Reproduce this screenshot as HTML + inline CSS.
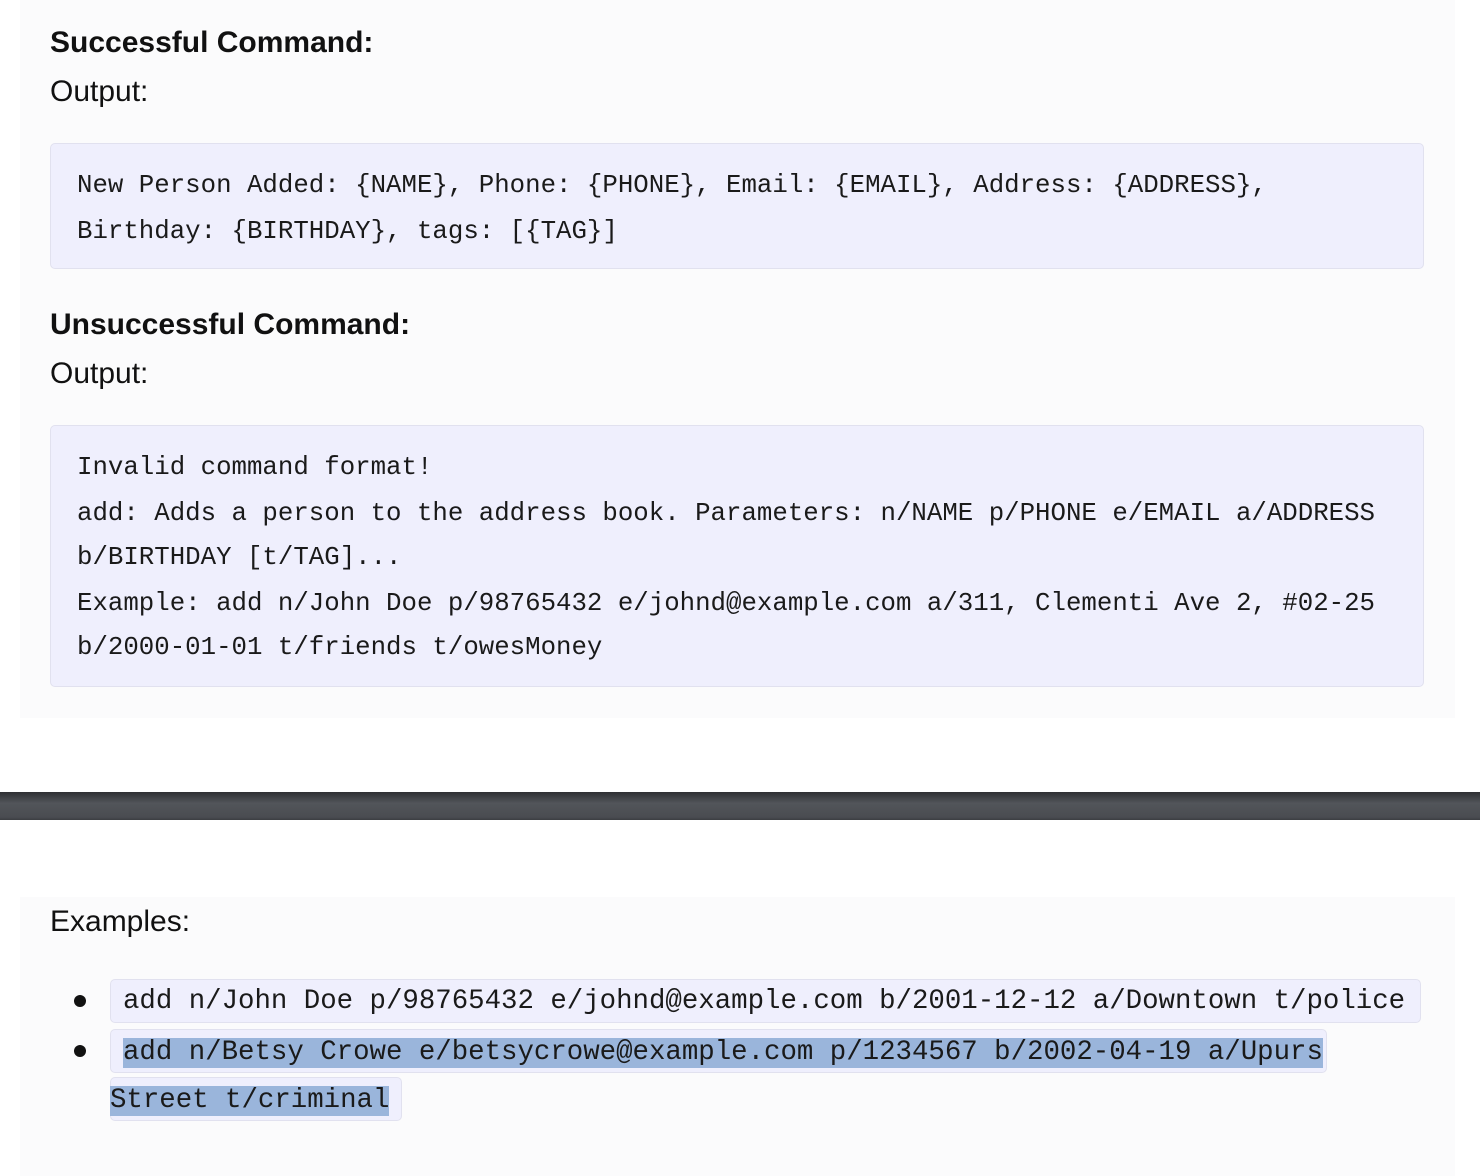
<!DOCTYPE html>
<html><head><style>
body{margin:0;width:1480px;height:1176px;background:#fff;position:relative;overflow:hidden;font-family:"Liberation Sans",sans-serif;color:#111}
.panel{position:absolute;left:20px;width:1435px;background:#fbfbfc}
.t{position:absolute;left:50px;white-space:nowrap}
.h{font-weight:bold;font-size:30px}
.o{font-size:30px}
.code{position:absolute;left:50px;width:1374px;background:#efeffd;border:1px solid #e1e1ef;border-radius:5px;box-sizing:border-box}
.code div{position:absolute;left:26px;font-family:"Liberation Mono",monospace;font-size:25.75px;white-space:nowrap;color:#1a1a1a}
.bar{position:absolute;left:0;top:792px;width:1480px;height:28px;background:linear-gradient(#2e2f33,#52555a 40%,#4a4c51 90%,#3c3d41)}
.ic{position:absolute;background:#efeffd;border:1px solid #e1e1ef;border-radius:5px;box-sizing:border-box}
.m{position:absolute;font-family:"Liberation Mono",monospace;font-size:27.4px;white-space:nowrap;color:#1a1a1a}
.sel{background:#9ab5db}
.dot{position:absolute;left:74px;width:12px;height:12px;border-radius:50%;background:#111}
</style></head><body>
<div class="panel" style="top:0;height:718px"></div>
<div class="panel" style="top:897px;height:279px"></div>
<div class="t h" style="top:26px">Successful Command:</div>
<div class="t o" style="top:75px">Output:</div>
<div class="code" style="top:143px;height:126px">
<div style="top:27px">New Person Added: {NAME}, Phone: {PHONE}, Email: {EMAIL}, Address: {ADDRESS},</div>
<div style="top:73px">Birthday: {BIRTHDAY}, tags: [{TAG}]</div>
</div>
<div class="t h" style="top:308px">Unsuccessful Command:</div>
<div class="t o" style="top:357px">Output:</div>
<div class="code" style="top:425px;height:262px">
<div style="top:27px">Invalid command format!</div>
<div style="top:73px">add: Adds a person to the address book. Parameters: n/NAME p/PHONE e/EMAIL a/ADDRESS</div>
<div style="top:117px">b/BIRTHDAY [t/TAG]...</div>
<div style="top:163px">Example: add n/John Doe p/98765432 e/johnd@example.com a/311, Clementi Ave 2, #02-25</div>
<div style="top:207px">b/2000-01-01 t/friends t/owesMoney</div>
</div>
<div class="bar"></div>
<div class="t o" style="top:905px">Examples:</div>
<div class="dot" style="top:995px"></div>
<div class="dot" style="top:1045px"></div>
<div class="ic" style="left:110px;top:979px;width:1311px;height:44px"></div>
<div class="ic" style="left:110px;top:1029px;width:1217px;height:44px"></div>
<div class="ic" style="left:110px;top:1077px;width:292px;height:44px"></div>
<div class="m" style="left:123px;top:986px">add n/John Doe p/98765432 e/johnd@example.com b/2001-12-12 a/Downtown t/police</div>
<div class="m sel" style="left:123px;top:1038px;line-height:30px">add n/Betsy Crowe e/betsycrowe@example.com p/1234567 b/2002-04-19 a/Upurs</div>
<div class="m sel" style="left:110px;top:1086px;line-height:30px">Street t/criminal</div>
</body></html>
